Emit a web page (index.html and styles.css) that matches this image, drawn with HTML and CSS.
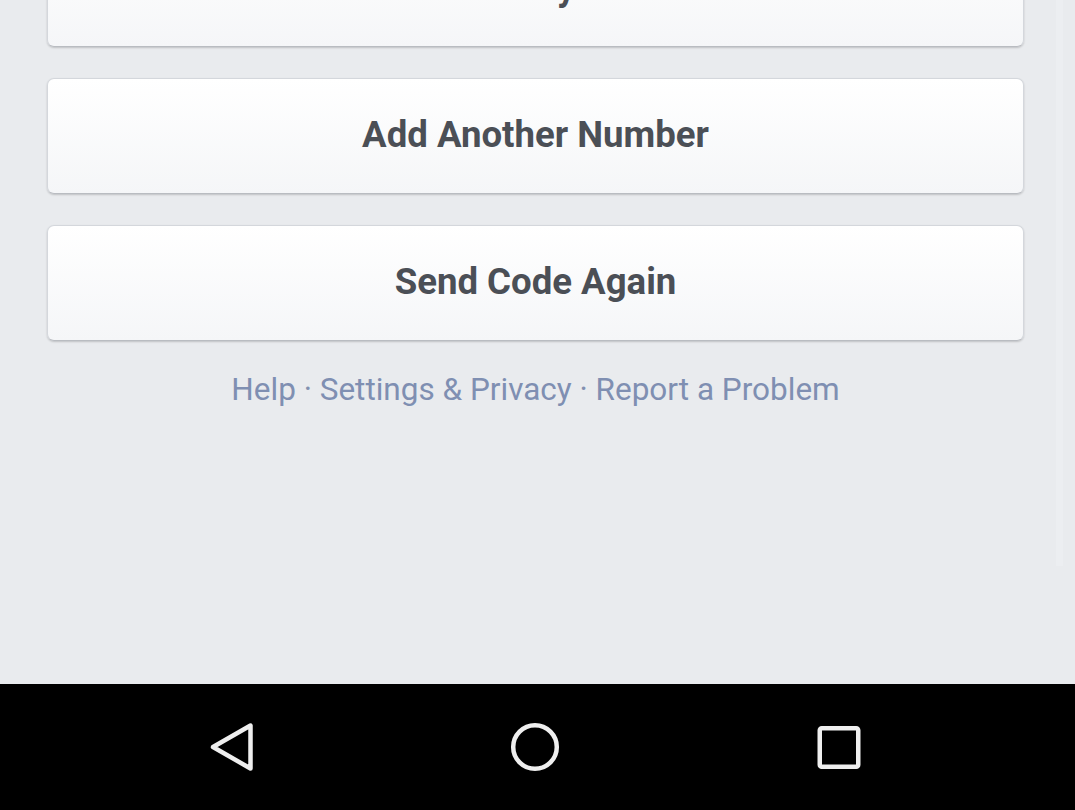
FILE: index.html
```html
<!DOCTYPE html>
<html lang="en">
<head>
<meta charset="utf-8">
<title>Confirm</title>
<link rel="stylesheet" href="styles.css">
</head>
<body>
<div class="screen">
  <main class="content">
    <div class="buttons">
      <button class="btn btn-cut">Confirm by Email</button>
      <button class="btn">Add Another Number</button>
      <button class="btn">Send Code Again</button>
    </div>
    <p class="links">
      <a href="#">Help</a> · <a href="#">Settings &amp; Privacy</a> · <a href="#">Report a Problem</a>
    </p>
    <div class="scrollbar"></div>
  </main>
  <nav class="navbar">
    <svg class="nav-icon" width="60" height="60" viewBox="0 0 60 60">
      <path d="M49.5 8.5 L49.5 51.5 L12 30 Z" fill="none" stroke="#efefef" stroke-width="4.5" stroke-linejoin="round"/>
    </svg>
    <svg class="nav-icon" width="60" height="60" viewBox="0 0 60 60">
      <circle cx="30" cy="30" r="21.8" fill="none" stroke="#efefef" stroke-width="4.5"/>
    </svg>
    <svg class="nav-icon" width="60" height="60" viewBox="0 0 60 60">
      <rect x="10.75" y="11.25" width="38.5" height="38.5" rx="2" fill="none" stroke="#efefef" stroke-width="4.5"/>
    </svg>
  </nav>
</div>
</body>
</html>
```

FILE: styles.css
```css
* { box-sizing: border-box; }
html, body {
  margin: 0;
  padding: 0;
  height: 100%;
  background: #e9ebee;
  font-family: Roboto, "Liberation Sans", Arial, sans-serif;
}
.screen {
  width: 1075px;
  height: 810px;
  display: flex;
  flex-direction: column;
  overflow: hidden;
}
.content {
  position: relative;
  height: 684px;
  flex: none;
  background: #e9ebee;
  padding: 0 51px 0 47px;
  overflow: hidden;
}
.buttons {
  display: flex;
  flex-direction: column;
  gap: 31px;
  margin-top: -69px;
}
.btn {
  height: 116px;
  width: 100%;
  border: 1px solid #d4d7dc;
  border-bottom-color: #b9bcc1;
  border-radius: 7px;
  background: linear-gradient(#ffffff, #f5f6f8);
  box-shadow: 0 1px 2px rgba(0,0,0,0.18);
  font-family: Roboto, "Liberation Sans", Arial, sans-serif;
  font-weight: 700;
  font-size: 36.6px;
  color: #4b4f56;
  padding: 0 0 4px 0;
}
.links {
  margin: 31px 0 0 0;
  text-align: center;
  font-size: 31.5px;
  line-height: 36px;
  color: #8190b0;
}
.links a {
  color: #7f8fb2;
  text-decoration: none;
}
.scrollbar {
  position: absolute;
  top: 0;
  left: 1056px;
  width: 7px;
  height: 566px;
  background: #eceef1;
}
.navbar {
  flex: 1;
  background: #000;
  display: flex;
  align-items: center;
  justify-content: flex-start;
  gap: 244px;
  padding-left: 201px;
}
.nav-icon {
  display: block;
  flex: none;
}
```
